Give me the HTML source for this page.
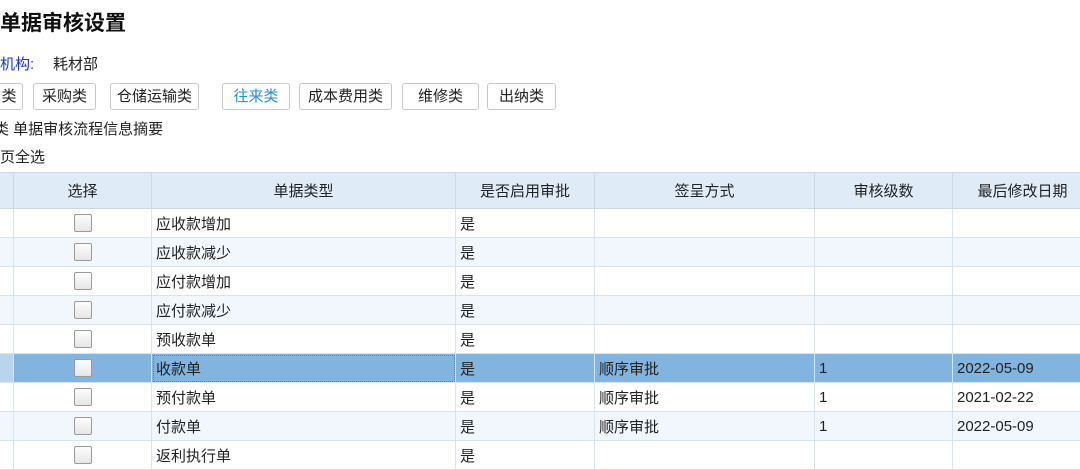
<!DOCTYPE html>
<html><head><meta charset="utf-8"><style>
*{margin:0;padding:0;box-sizing:border-box}
body{width:1080px;height:459px;overflow:hidden;background:#fff;font-family:"Liberation Sans","Noto Sans CJK SC",sans-serif;font-size:15px;color:#222;position:relative}
.a{position:absolute;white-space:nowrap}
.btn{position:absolute;top:83px;height:27px;border:1px solid #c9c9c9;border-radius:3px;background:#fff;font-size:15px;line-height:25px;text-align:center;color:#222}
table{position:absolute;left:-2px;top:172px;border-collapse:collapse;table-layout:fixed;width:1094px}
td,th{border:1px solid #d3e4f3;height:29px;font-weight:normal;white-space:nowrap;overflow:hidden;padding:0 0 0 4px;font-size:15px}
th{background:#dfebf7;height:36px;text-align:center;padding:0;border-color:#c9d9e8}
tr.alt td{background:#f1f7fd}
tr.sel td{background:#82b4e0}
.cb{display:inline-block;width:18px;height:18px;border:1px solid #9a9a9a;border-radius:2px;background:linear-gradient(#fdfdfd,#e6e6e6);vertical-align:middle}
td.c{text-align:center;padding:0}
</style></head><body>
<div class="a" style="left:0;top:7px;font-size:21px;font-weight:bold;color:#111">单据审核设置</div>
<div class="a" style="left:0;top:53px;color:#2233cc">机构:</div>
<div class="a" style="left:53px;top:53px">耗材部</div>
<div class="btn" style="left:-5px;width:28px">类</div>
<div class="btn" style="left:33px;width:63px">采购类</div>
<div class="btn" style="left:110px;width:89px">仓储运输类</div>
<div class="btn" style="left:222px;width:68px;color:#2a8fcf">往来类</div>
<div class="btn" style="left:299px;width:93px">成本费用类</div>
<div class="btn" style="left:402px;width:77px">维修类</div>
<div class="btn" style="left:487px;width:69px">出纳类</div>
<div class="a" style="left:-6px;top:118px">类 单据审核流程信息摘要</div>
<div class="a" style="left:0;top:146px">页全选</div>
<table>
<colgroup><col style="width:15px"><col style="width:138px"><col style="width:304px"><col style="width:139px"><col style="width:220px"><col style="width:138px"><col style="width:140px"></colgroup>
<tr><th></th><th>选择</th><th>单据类型</th><th>是否启用审批</th><th>签呈方式</th><th>审核级数</th><th>最后修改日期</th></tr>
<tr><td></td><td class="c"><span class="cb"></span></td><td>应收款增加</td><td>是</td><td></td><td></td><td></td></tr>
<tr class="alt"><td></td><td class="c"><span class="cb"></span></td><td>应收款减少</td><td>是</td><td></td><td></td><td></td></tr>
<tr><td></td><td class="c"><span class="cb"></span></td><td>应付款增加</td><td>是</td><td></td><td></td><td></td></tr>
<tr class="alt"><td></td><td class="c"><span class="cb"></span></td><td>应付款减少</td><td>是</td><td></td><td></td><td></td></tr>
<tr><td></td><td class="c"><span class="cb"></span></td><td>预收款单</td><td>是</td><td></td><td></td><td></td></tr>
<tr class="sel"><td style="background:#b9d5ee"></td><td class="c"><span class="cb"></span></td><td style="outline:1px dotted #5580b0;outline-offset:-2px">收款单</td><td>是</td><td>顺序审批</td><td>1</td><td>2022-05-09</td></tr>
<tr><td></td><td class="c"><span class="cb"></span></td><td>预付款单</td><td>是</td><td>顺序审批</td><td>1</td><td>2021-02-22</td></tr>
<tr class="alt"><td></td><td class="c"><span class="cb"></span></td><td>付款单</td><td>是</td><td>顺序审批</td><td>1</td><td>2022-05-09</td></tr>
<tr><td></td><td class="c"><span class="cb"></span></td><td>返利执行单</td><td>是</td><td></td><td></td><td></td></tr>
</table>
</body></html>
